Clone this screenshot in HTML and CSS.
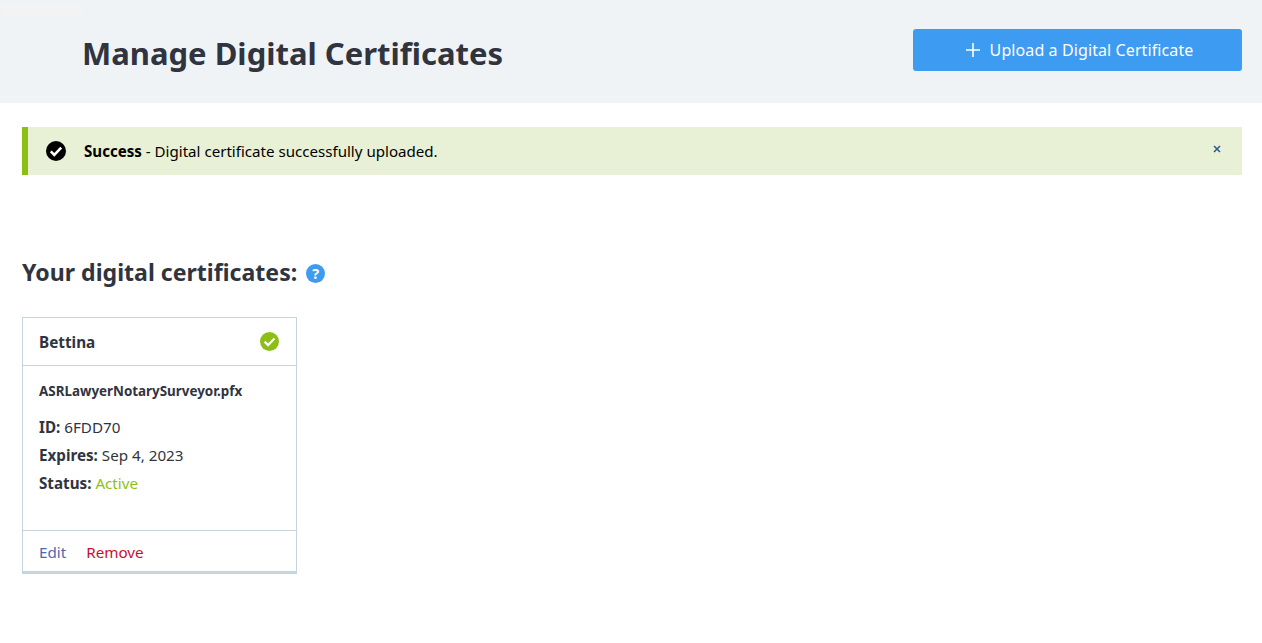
FILE: index.html
```html
<!DOCTYPE html>
<html lang="en">
<head>
<meta charset="utf-8">
<title>Manage Digital Certificates</title>
<link rel="stylesheet" href="styles.css">
</head>
<body>
<div class="ghost"></div>
<header class="page-header">
  <h1 class="page-title">Manage Digital Certificates</h1>
  <button class="upload-btn" type="button">
    <svg class="plus" width="14" height="14" viewBox="0 0 14 14"><path d="M7 0v14M0 7h14" stroke="#fff" stroke-width="1.6" fill="none"/></svg>
    <span>Upload a Digital Certificate</span>
  </button>
</header>
<main class="content">
  <div class="alert">
    <svg class="alert-icon" width="20" height="20" viewBox="0 0 20 20"><circle cx="10" cy="10" r="10" fill="#000"/><path d="M4.8 10.4l3.5 3.5 6.9-7.2" stroke="#fff" stroke-width="2.6" fill="none"/></svg>
    <p class="alert-text"><strong>Success</strong> - Digital certificate successfully uploaded.</p>
    <svg class="alert-close" width="8" height="8" viewBox="0 0 8 8"><path d="M1 1l6 6M7 1L1 7" stroke="#2f5a94" stroke-width="1.6" fill="none"/></svg>
  </div>
  <h2 class="section-title">Your digital certificates:
    <span class="help">?</span>
  </h2>
  <article class="card">
    <div class="card-head">
      <span class="card-name">Bettina</span>
      <svg width="19" height="19" viewBox="0 0 19 19"><circle cx="9.5" cy="9.5" r="9.5" fill="#8cbf16"/><path d="M4.6 9.6l3.5 3.5 6.4-6.7" stroke="#fff" stroke-width="2.2" fill="none"/></svg>
    </div>
    <div class="card-body">
      <p class="file">ASRLawyerNotarySurveyor.pfx</p>
      <p class="row"><b>ID:</b> 6FDD70</p>
      <p class="row"><b>Expires:</b> Sep 4, 2023</p>
      <p class="row"><b>Status:</b> <span class="active">Active</span></p>
    </div>
    <div class="card-foot">
      <a class="edit">Edit</a>
      <a class="remove">Remove</a>
    </div>
  </article>
</main>
</body>
</html>
```
FILE: styles.css
```css
* { box-sizing: border-box; }
html, body { margin: 0; padding: 0; }
body {
  position: relative;
  height: 643px;
  overflow: hidden;
  background: #fff;
  color: #30343f;
  font-family: "Noto Sans", "Open Sans", sans-serif;
}
.ghost {
  position: absolute;
  left: 1px;
  top: 4px;
  width: 81px;
  height: 13px;
  background: #f3f3f3;
  border-radius: 2px;
}
.page-header {
  height: 103px;
  background: #f0f3f6;
  padding: 29px 20px 0 82px;
  display: flex;
  justify-content: space-between;
  align-items: flex-start;
}
.page-title {
  margin: 3px 0 0;
  font-size: 31px;
  line-height: 42px;
  font-weight: 700;
}
.upload-btn {
  width: 329px;
  height: 42px;
  border: 0;
  border-radius: 3px;
  background: #3d9bf1;
  color: #fff;
  font: 400 16px/42px "Noto Sans", sans-serif;
  letter-spacing: 0.1px;
  display: flex;
  align-items: center;
  justify-content: center;
  gap: 10px;
  padding: 0 0 0 4px;
}
.content { padding: 24px 20px 0 22px; }
.alert {
  position: relative;
  height: 48px;
  background: #e8f0d5;
  border-left: 6px solid #8cbf16;
  display: flex;
  align-items: center;
  padding-left: 18px;
  color: #000;
}
.alert-icon { flex: none; }
.alert-text { margin: 0 0 0 18px; font-size: 15.1px; }
.alert-close { position: absolute; right: 21px; top: 18px; }
.section-title {
  margin: 82px 0 0;
  font-size: 23.1px;
  line-height: 30px;
  font-weight: 700;
  display: flex;
  align-items: center;
  gap: 9px;
}
.help {
  width: 19px;
  height: 19px;
  margin-top: 2px;
  border-radius: 50%;
  background: #3d9bf1;
  color: #fff;
  font-size: 14.5px;
  line-height: 19px;
  text-align: center;
}
.card {
  margin-top: 30px;
  width: 275px;
  height: 257px;
  border: 1px solid #c8d4dc;
  border-bottom-width: 3px;
  display: flex;
  flex-direction: column;
}
.card-head {
  height: 48px;
  flex: none;
  display: flex;
  align-items: center;
  justify-content: space-between;
  padding: 0 17px 0 16px;
  border-bottom: 1px solid #c8d4dc;
}
.card-name { font-size: 15.3px; font-weight: 700; }
.card-body { flex: 1; padding: 15px 16px 0; }
.file { margin: 0 0 12px; font-size: 13.4px; line-height: 20px; font-weight: 700; }
.row { margin: 0; font-size: 15.2px; line-height: 28px; }
.active { color: #8cbf16; }
.card-foot {
  height: 41px;
  flex: none;
  border-top: 1px solid #c8d4dc;
  display: flex;
  align-items: center;
  gap: 20px;
  padding: 1px 16px 0;
  font-size: 15.2px;
}
.edit { color: #4f66b0; }
.remove { color: #c8102e; }
```
